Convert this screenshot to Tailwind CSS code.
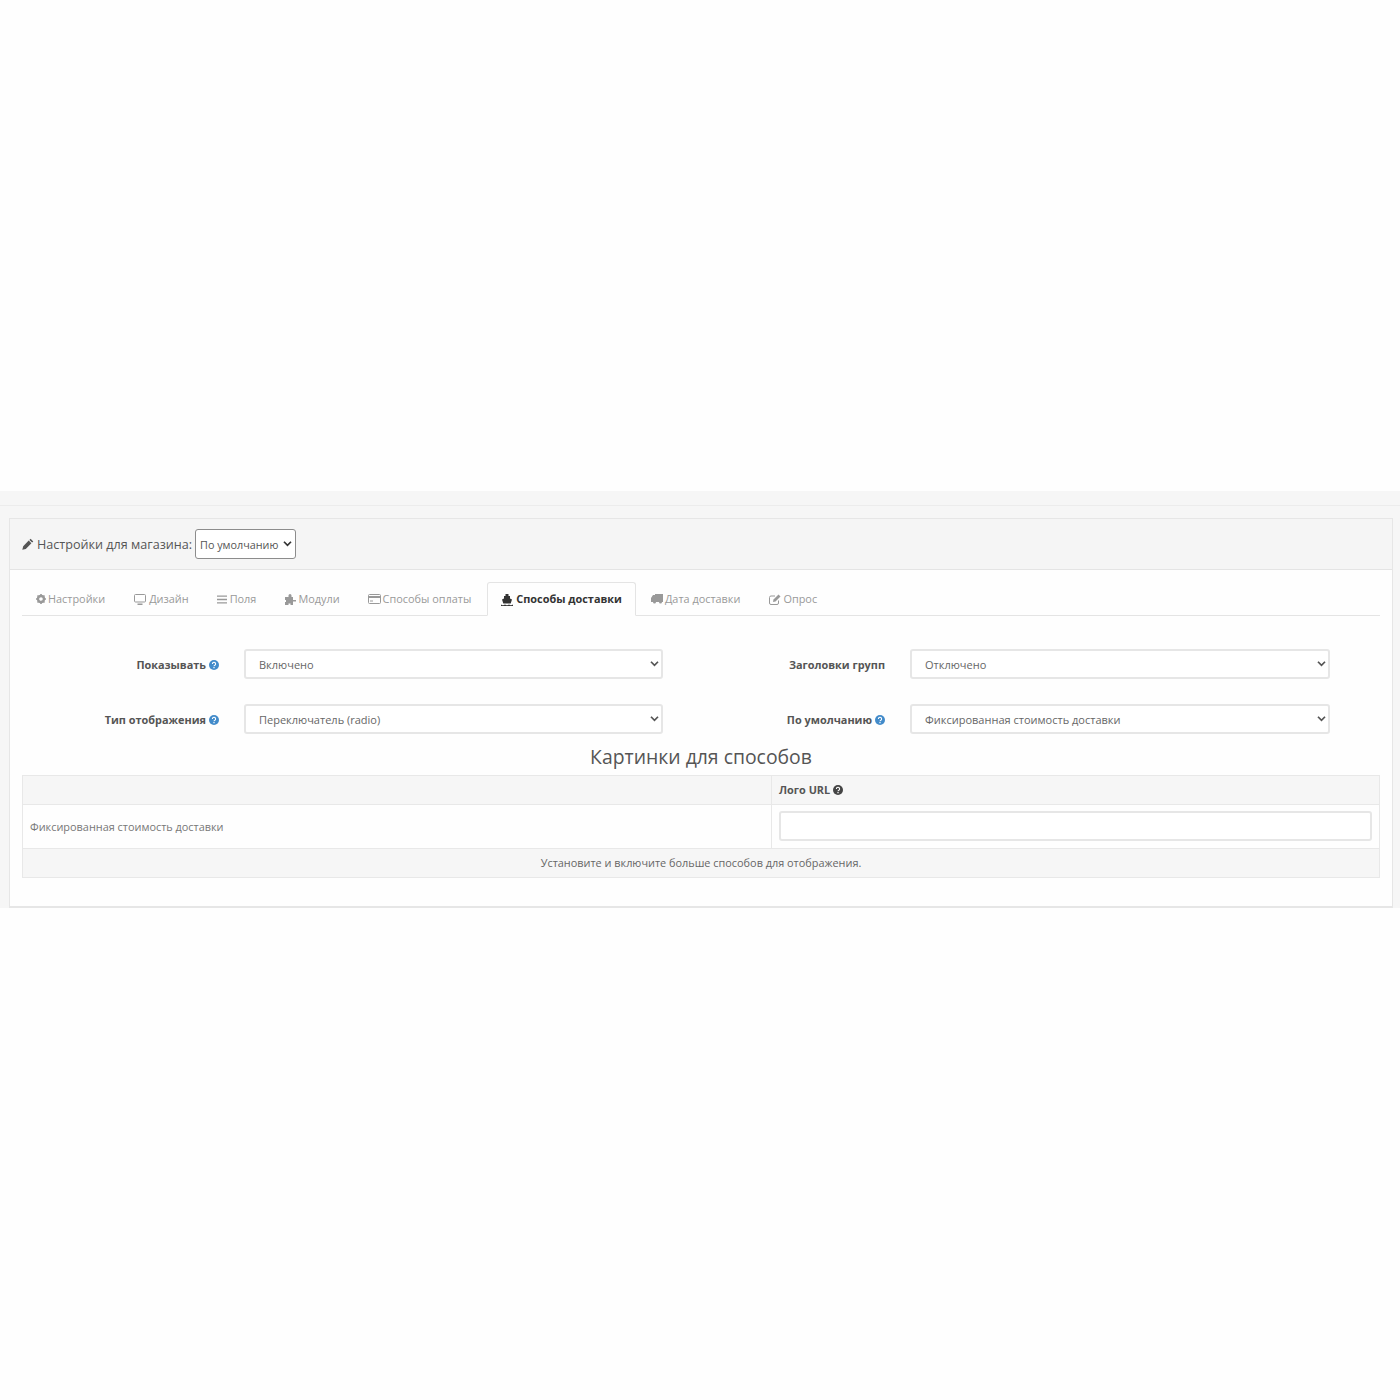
<!DOCTYPE html>
<html lang="ru">
<head>
    <meta charset="UTF-8">
    <meta name="viewport" content="width=device-width, initial-scale=1.0">
    <title>Настройки доставки</title>
    <script src="https://cdn.jsdelivr.net/npm/@tailwindcss/browser@4"></script>
</head>
<body class="bg-[#fefefe] min-h-screen font-['Open_Sans',sans-serif] text-[#666]">
    <div class="h-[491px]"></div>

    <div class="bg-[#f6f6f6] h-[417px]">
        <div class="h-[15px] border-b border-[#ececec]"></div>

        <div class="ml-[9px] mr-[7px] mt-[12px] h-[390px] bg-[#fefefe] border border-[#e6e6e6] border-b-2">
            <!-- panel heading -->
            <div class="h-[51px] bg-[#f5f5f5] border-b border-[#e4e4e4] flex items-center pl-[12px] text-[12.6px] text-[#555]">
                <svg class="w-[12px] h-[12px] mr-[3px] shrink-0" viewBox="0 0 12 12"><path fill="#555" d="M8.600.7l2.700 2.700-1.200 1.200-2.700-2.700zM6.700 2.600l2.700 2.700-5.600 5.600-3.500.9.900-3.600z"/></svg>
                <span class="pt-[2px]">Настройки для магазина:</span>
                <div class="relative ml-[3px]">
                    <select class="appearance-none block w-[101px] h-[30px] pl-[4px] pt-[2px] bg-white border border-[#8c8c8c] rounded-[3px] text-[10.8px] text-[#555]">
                        <option>По умолчанию</option>
                    </select>
                    <svg class="absolute right-[4px] top-[11px] w-[9px] h-[7px] pointer-events-none" viewBox="0 0 10 8"><path d="M1 2l4 4 4-4" fill="none" stroke="#333" stroke-width="2"/></svg>
                </div>
            </div>

            <div class="px-[12px] pt-[12px]">
                <!-- tabs -->
                <div class="flex h-[34px] border-b border-[#e4e4e4] text-[10.9px] text-[#999]">
                    <div class="flex items-center gap-[2px] pl-[14px] pr-[15px] pt-[1px]">
                        <svg class="w-[10px] h-[10px]" viewBox="0 0 10 10"><circle cx="5" cy="5" r="3" fill="none" stroke="#999" stroke-width="2.400"/><path stroke="#999" stroke-width="1.600" d="M5 0v2M5 8v2M0 5h2M8 5h2M1.500 1.500l1.400 1.400M7.100 7.100l1.400 1.400M8.500 1.500L7.100 2.900M2.900 7.100L1.500 8.500"/></svg>
                        <span>Настройки</span>
                    </div>
                    <div class="flex items-center gap-[3px] px-[14px] pt-[1px]">
                        <svg class="w-[12px] h-[11px]" viewBox="0 0 12 11"><rect x=".5" y=".5" width="11" height="7.500" rx="1" fill="none" stroke="#999"/><path fill="#999" d="M3.500 9.500h5V11h-5z"/></svg>
                        <span>Дизайн</span>
                    </div>
                    <div class="flex items-center gap-[3px] px-[14px] pt-[1px]">
                        <svg class="w-[10px] h-[9px]" viewBox="0 0 11 9"><path fill="#999" d="M0 0h11v1.500H0zM0 3.700h11v1.500H0zM0 7.500h11V9H0z"/></svg>
                        <span>Поля</span>
                    </div>
                    <div class="flex items-center gap-[2px] px-[14px] pt-[1px]">
                        <svg class="w-[12px] h-[11px]" viewBox="0 0 12 11"><path fill="#999" d="M3 3h1.500V1.500a1.500 1.500 0 0 1 3 0V3H9v3h3v1.500H9V11H6.500V9.500h-2V11H1V8h1V6H1V3z"/></svg>
                        <span>Модули</span>
                    </div>
                    <div class="flex items-center gap-[2px] pl-[14px] pr-[16px] pt-[1px]">
                        <svg class="w-[13px] h-[10px]" viewBox="0 0 13 10"><rect x=".5" y=".5" width="12" height="9" rx="1" fill="none" stroke="#999"/><path fill="#999" d="M1 2h11v2H1zM2 6.500h3v1H2z"/></svg>
                        <span>Способы оплаты</span>
                    </div>
                    <div class="flex items-center gap-[3px] pl-[13px] pr-[13px] mr-[1px] pt-[1px] h-[34px] bg-[#fefefe] border border-[#e4e4e4] border-b-[#fefefe] rounded-t-[3px] text-[#333] font-bold">
                        <svg class="w-[12px] h-[12px]" viewBox="0 0 12 12"><path fill="#333" d="M4.500 0h3v2h1.500v2.500l2 1-1.300 4H2.300L1 5.500l2-1V2h1.500zM0 10.500c1.300.9 2.700.9 4 0 1.300.9 2.700.9 4 0 1.300.9 2.700.9 4 0V12H0z"/></svg>
                        <span>Способы доставки</span>
                    </div>
                    <div class="flex items-center gap-[2px] pl-[14px] pr-[15px] pt-[1px]">
                        <svg class="w-[12px] h-[10px]" viewBox="0 0 12 10"><path fill="#999" d="M4 0h8v8h-1a1.500 1.500 0 0 1-3 0H5a1.500 1.500 0 0 1-3 0H0V4l2-3h2z"/></svg>
                        <span>Дата доставки</span>
                    </div>
                    <div class="flex items-center gap-[2px] px-[14px] pt-[1px]">
                        <svg class="w-[12px] h-[11px]" viewBox="0 0 12 11"><path fill="none" stroke="#999" d="M9.500 6.500v2.500a1.500 1.500 0 0 1-1.500 1.500H2A1.500 1.500 0 0 1 .5 9V3.500A1.500 1.500 0 0 1 2 2h4"/><path fill="#999" d="M9.500 .5l2 2-5 5-2.500.5.500-2.500z"/></svg>
                        <span>Опрос</span>
                    </div>
                </div>

                <!-- form rows -->
                <div class="mt-[33px] flex flex-col gap-[25px] text-[10.9px]">
                    <div class="flex items-center h-[30px]">
                        <div class="w-[197px] pt-[2px] flex justify-end items-center gap-[3px] font-bold text-[#555]">
                            <span>Показывать</span>
                            <svg class="w-[10px] h-[10px]" viewBox="0 0 10 10"><circle cx="5" cy="5" r="5" fill="#428bca"/><path d="M3.400 3.900a1.600 1.600 0 1 1 2.400 1.400c-.6.300-.8.500-.8 1" fill="none" stroke="#fff" stroke-width="1.100"/><path fill="#fff" d="M4.400 7h1.200v1.200H4.400z"/></svg>
                        </div>
                        <div class="relative ml-[25px] w-[419px]">
                            <select class="appearance-none block w-full h-[30px] pl-[13px] pt-[3px] bg-white border-2 border-[#e6e6e6] rounded-[3px] text-[11px] text-[#666]"><option>Включено</option></select>
                            <svg class="absolute right-[4px] top-[11px] w-[9px] h-[7px] pointer-events-none" viewBox="0 0 10 8"><path d="M1 2l4 4 4-4" fill="none" stroke="#555" stroke-width="2"/></svg>
                        </div>
                        <div class="w-[222px] pt-[2px] text-right font-bold text-[#555]">Заголовки групп</div>
                        <div class="relative ml-[25px] w-[420px]">
                            <select class="appearance-none block w-full h-[30px] pl-[13px] pt-[3px] bg-white border-2 border-[#e6e6e6] rounded-[3px] text-[11px] text-[#666]"><option>Отключено</option></select>
                            <svg class="absolute right-[4px] top-[11px] w-[9px] h-[7px] pointer-events-none" viewBox="0 0 10 8"><path d="M1 2l4 4 4-4" fill="none" stroke="#555" stroke-width="2"/></svg>
                        </div>
                    </div>
                    <div class="flex items-center h-[30px]">
                        <div class="w-[197px] pt-[2px] flex justify-end items-center gap-[3px] font-bold text-[#555]">
                            <span>Тип отображения</span>
                            <svg class="w-[10px] h-[10px]" viewBox="0 0 10 10"><circle cx="5" cy="5" r="5" fill="#428bca"/><path d="M3.400 3.900a1.600 1.600 0 1 1 2.400 1.400c-.6.300-.8.500-.8 1" fill="none" stroke="#fff" stroke-width="1.100"/><path fill="#fff" d="M4.400 7h1.200v1.200H4.400z"/></svg>
                        </div>
                        <div class="relative ml-[25px] w-[419px]">
                            <select class="appearance-none block w-full h-[30px] pl-[13px] pt-[3px] bg-white border-2 border-[#e6e6e6] rounded-[3px] text-[11px] text-[#666]"><option>Переключатель (radio)</option></select>
                            <svg class="absolute right-[4px] top-[11px] w-[9px] h-[7px] pointer-events-none" viewBox="0 0 10 8"><path d="M1 2l4 4 4-4" fill="none" stroke="#555" stroke-width="2"/></svg>
                        </div>
                        <div class="w-[222px] pt-[2px] flex justify-end items-center gap-[3px] font-bold text-[#555]">
                            <span>По умолчанию</span>
                            <svg class="w-[10px] h-[10px]" viewBox="0 0 10 10"><circle cx="5" cy="5" r="5" fill="#428bca"/><path d="M3.400 3.900a1.600 1.600 0 1 1 2.400 1.400c-.6.300-.8.500-.8 1" fill="none" stroke="#fff" stroke-width="1.100"/><path fill="#fff" d="M4.400 7h1.200v1.200H4.400z"/></svg>
                        </div>
                        <div class="relative ml-[25px] w-[420px]">
                            <select class="appearance-none block w-full h-[30px] pl-[13px] pt-[3px] bg-white border-2 border-[#e6e6e6] rounded-[3px] text-[11px] text-[#666]"><option>Фиксированная стоимость доставки</option></select>
                            <svg class="absolute right-[4px] top-[11px] w-[9px] h-[7px] pointer-events-none" viewBox="0 0 10 8"><path d="M1 2l4 4 4-4" fill="none" stroke="#555" stroke-width="2"/></svg>
                        </div>
                    </div>
                </div>

                <h3 class="mt-[9px] h-[32px] leading-[28px] text-center text-[19.400px] text-[#555]">Картинки для способов</h3>

                <!-- methods table -->
                <div class="border border-[#e8e8e8] text-[10.9px]">
                    <div class="flex h-[29px] bg-[#f6f6f6] border-b border-[#e8e8e8]">
                        <div class="w-[749px] border-r border-[#e8e8e8]"></div>
                        <div class="flex items-center gap-[3px] pl-[7px] font-bold text-[#555]">
                            <span>Лого URL</span>
                            <svg class="w-[10px] h-[10px]" viewBox="0 0 10 10"><circle cx="5" cy="5" r="5" fill="#444"/><path d="M3.400 3.900a1.600 1.600 0 1 1 2.400 1.400c-.6.300-.8.500-.8 1" fill="none" stroke="#fff" stroke-width="1.100"/><path fill="#fff" d="M4.400 7h1.200v1.200H4.400z"/></svg>
                        </div>
                    </div>
                    <div class="flex h-[44px] border-b border-[#e8e8e8]">
                        <div class="w-[749px] border-r border-[#e8e8e8] flex items-center pl-[7px] pt-[1px] text-[#777]">Фиксированная стоимость доставки</div>
                        <div class="flex-1 px-[7px] pt-[6px]">
                            <input type="text" class="block w-full h-[30px] bg-white border-2 border-[#e6e6e6] rounded-[3px]">
                        </div>
                    </div>
                    <div class="h-[28px] bg-[#f6f6f6] flex items-center justify-center text-[#666]">Установите и включите больше способов для отображения.</div>
                </div>
            </div>
        </div>
    </div>
</body>
</html>
